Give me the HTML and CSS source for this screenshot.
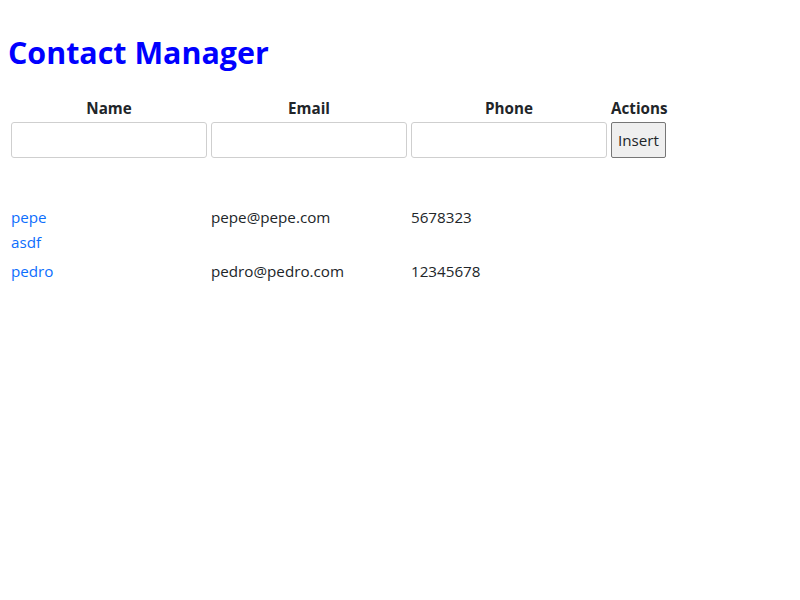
FILE: index.html
```html
<!DOCTYPE html>
<html>
<head>
<meta charset="utf-8">
<link rel="stylesheet" href="styles.css">
</head>
<body>
<h1 class="title">Contact Manager</h1>
<table class="form-table">
  <thead>
    <tr><th>Name</th><th>Email</th><th>Phone</th><th>Actions</th></tr>
  </thead>
  <tbody>
    <tr>
      <td><input class="field" type="text"></td>
      <td><input class="field" type="text"></td>
      <td><input class="field" type="text"></td>
      <td><button class="btn">Insert</button></td>
    </tr>
  </tbody>
</table>
<div class="list">
  <div class="row">
    <div class="cell name"><div>pepe</div><div>asdf</div></div>
    <div class="cell">pepe@pepe.com</div>
    <div class="cell">5678323</div>
  </div>
  <div class="row">
    <div class="cell name"><div>pedro</div></div>
    <div class="cell">pedro@pedro.com</div>
    <div class="cell">12345678</div>
  </div>
</div>
</body>
</html>
```
FILE: styles.css
```css
html, body { background: #fff; }
body {
  margin: 8px;
  font-family: "Open Sans", "Noto Sans", sans-serif;
  font-size: 15.2px;
  line-height: 1.5;
  color: #212529;
}
.title {
  margin: 26px 0 23px;
  font-size: 30.4px;
  line-height: 38px;
  font-weight: 700;
  color: #0000ff;
}
.form-table {
  border-spacing: 2px;
  border-collapse: separate;
}
.form-table th {
  padding: 1px;
  font-weight: 700;
  line-height: 20px;
  text-align: center;
}
.form-table td { padding: 1px; }
.field {
  box-sizing: border-box;
  width: 196px;
  height: 36px;
  margin: 0;
  border: 1px solid #cfcfcf;
  border-radius: 3px;
  font: inherit;
}
.btn {
  box-sizing: border-box;
  height: 36px;
  padding: 0 6px;
  margin: 0;
  border: 1px solid #767676;
  border-radius: 2px;
  background: #efefef;
  color: #212529;
  font: inherit;
}
.list { margin-top: 44px; padding-left: 3px; }
.row { display: flex; margin-bottom: 4px; }
.cell { width: 200px; line-height: 25px; }
.name { color: #0d6efd; }
```
